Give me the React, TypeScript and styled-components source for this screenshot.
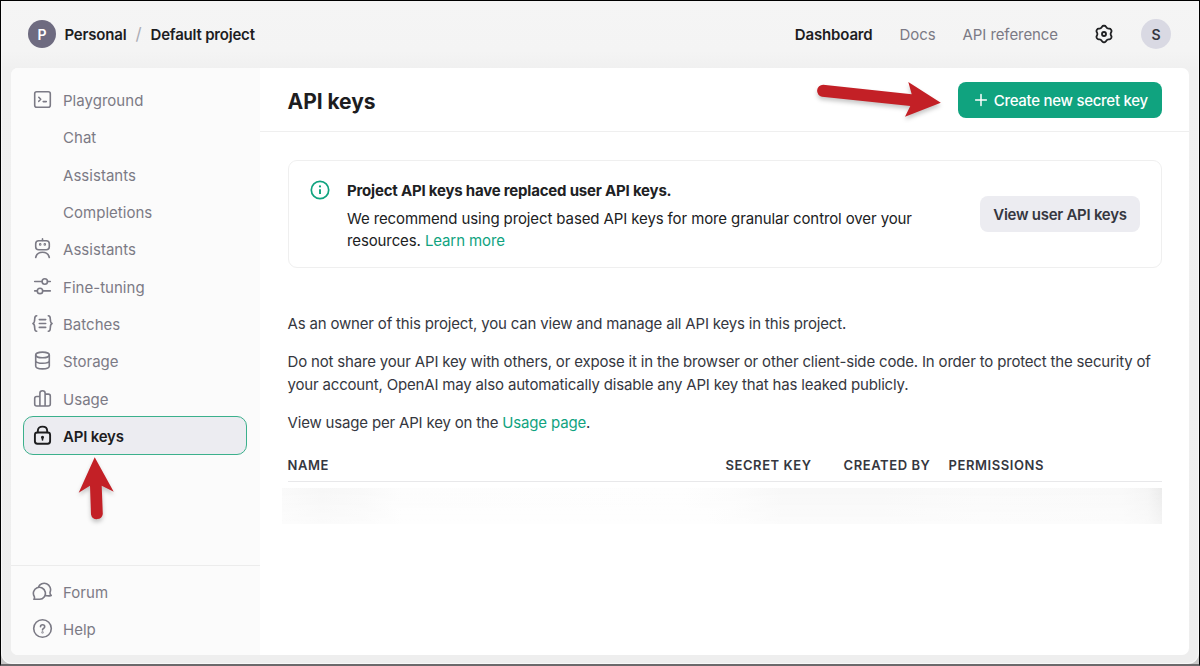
import React from "react";
import styled, { createGlobalStyle } from "styled-components";

const GlobalStyle = createGlobalStyle`
  * { box-sizing: border-box; }
  html, body { margin: 0; padding: 0; background: #c9c9c9; }
  body {
    font-family: Inter, "Liberation Sans", sans-serif;
    -webkit-font-smoothing: antialiased;
    overflow: hidden;
  }
`;

const Desktop = styled.div`
  position: relative;
  width: 1200px;
  height: 666px;
  border: 1px solid #000;
  border-bottom: 2px solid #6b696b;
  background: #c9c9c9;
`;

const AppWindow = styled.div`
  display: flex;
  flex-direction: column;
  height: 100%;
  padding: 0 9px 8px;
  border: 1px solid #f8f8f8;
  border-width: 0 1px 1px;
  border-radius: 0 0 11px 11px;
  background: linear-gradient(#f5f5f5 0, #f4f4f4 50px, #f0f0f0 68px, #eeeeee 100%);
`;

const TopBar = styled.header`
  display: flex;
  align-items: center;
  flex: none;
  height: 67px;
  padding: 0 18px 1px 17px;
`;

const Avatar = styled.span<{ $tone: "dark" | "light" }>`
  display: flex;
  align-items: center;
  justify-content: center;
  width: ${(p) => (p.$tone === "dark" ? 28 : 30)}px;
  height: ${(p) => (p.$tone === "dark" ? 28 : 30)}px;
  border-radius: 50%;
  background: ${(p) => (p.$tone === "dark" ? "#6e6b80" : "#d9d9e3")};
  color: ${(p) => (p.$tone === "dark" ? "#fff" : "#353740")};
  font-size: 14px;
  font-weight: 600;
`;

const Crumb = styled.span`
  color: #1d1d1f;
  font-size: 15px;
  font-weight: 600;
  letter-spacing: -0.2px;
  line-height: 20px;
`;

const CrumbList = styled.div`
  display: flex;
  align-items: center;
  gap: 9px;
  margin-left: 8.5px;
  padding-top: 2px;
`;

const Slash = styled.span`
  color: #acacb4;
  font-size: 17px;
  line-height: 20px;
  margin-top: -2px;
`;

const TopNav = styled.nav`
  display: flex;
  align-items: center;
  margin-left: auto;
  gap: 27px;
`;

const TopLink = styled.a<{ $active?: boolean }>`
  padding-top: 2px;
  color: ${(p) => (p.$active ? "#1d1d1f" : "#7b7a85")};
  font-size: 15px;
  font-weight: ${(p) => (p.$active ? 600 : 400)};
  letter-spacing: ${(p) => (p.$active ? "-0.15px" : "-0.08px")};
  line-height: 20px;
`;

const TopIcons = styled.div`
  display: flex;
  align-items: center;
  gap: 26px;
  margin-left: 8px;
`;

const Panel = styled.div`
  display: flex;
  flex: 1;
  min-height: 0;
  overflow: hidden;
  border-radius: 7px;
  background: #fff;
`;

const Sidebar = styled.aside`
  display: flex;
  flex-direction: column;
  flex: none;
  width: 249px;
  padding-top: 13px;
  background: #fbfbfb;
`;

const NavItem = styled.a<{ $active?: boolean }>`
  display: flex;
  align-items: center;
  height: ${(p) => (p.$active ? 39 : 37.33)}px;
  margin: ${(p) => (p.$active ? "-1px" : "0")} 13px 0 12px;
  padding-left: ${(p) => (p.$active ? 8 : 9)}px;
  border: ${(p) => (p.$active ? "1.5px solid #3bb08c" : "0")};
  border-radius: 10px;
  background: ${(p) => (p.$active ? "#ececf1" : "transparent")};
  color: ${(p) => (p.$active ? "#1d1d1f" : "#7b7a85")};
  font-size: 15px;
  font-weight: ${(p) => (p.$active ? 600 : 400)};
  letter-spacing: ${(p) => (p.$active ? "-0.2px" : "0.03px")};
`;

const NavIcon = styled.span`
  display: flex;
  width: 21px;
  height: 21px;
  margin-right: 10px;
  color: inherit;
`;

const NavLabel = styled.span`
  padding-top: 2px;
`;

const SidebarFooter = styled.div`
  margin-top: auto;
  padding: 6px 0 8px;
  border-top: 1px solid #ececec;
`;

const Content = styled.main`
  display: flex;
  flex-direction: column;
  flex: 1;
  min-width: 0;
`;

const ContentHeader = styled.div`
  display: flex;
  align-items: center;
  justify-content: space-between;
  flex: none;
  height: 64px;
  padding: 0 27px 0 27.5px;
  border-bottom: 1px solid #efefef;
`;

const Title = styled.h1`
  margin: 4px 0 0;
  color: #1d1d1f;
  font-size: 21px;
  font-weight: 700;
  letter-spacing: -0.05px;
  line-height: 28px;
`;

const Button = styled.button<{ $primary?: boolean }>`
  display: flex;
  align-items: center;
  justify-content: center;
  flex: none;
  width: ${(p) => (p.$primary ? 204 : 160)}px;
  height: 36px;
  padding: ${(p) => (p.$primary ? "1px 0 0 2px" : "0")};
  border: 0;
  border-radius: 8px;
  background: ${(p) => (p.$primary ? "#10a37f" : "#ececf1")};
  color: ${(p) => (p.$primary ? "#fff" : "#353740")};
  font-family: inherit;
  font-size: 15px;
  font-weight: ${(p) => (p.$primary ? 500 : 600)};
  letter-spacing: ${(p) => (p.$primary ? "-0.28px" : "-0.27px")};
  gap: 5.5px;
`;

const Body = styled.div`
  display: flex;
  flex-direction: column;
  padding: 28px 27px 0 27.5px;
`;

const Notice = styled.section`
  display: flex;
  align-items: center;
  height: 108px;
  padding: 0 21px 0 21.5px;
  border: 1px solid #efefef;
  border-radius: 9px;
`;

const NoticeIcon = styled.span`
  align-self: flex-start;
  display: flex;
  margin: 19px 17px 0 0;
`;

const NoticeText = styled.div`
  flex: 1;
  padding-top: 5px;
  color: #202123;
  font-size: 15px;
  letter-spacing: -0.11px;
  line-height: 22.5px;
  white-space: nowrap;
`;

const NoticeTitle = styled.strong`
  display: block;
  margin-bottom: 5px;
  font-weight: 700;
  letter-spacing: -0.2px;
`;

const Link = styled.a`
  color: #10a37f;
`;

const Copy = styled.div`
  display: flex;
  flex-direction: column;
  gap: 16px;
  margin-top: 45px;
  color: #353740;
  font-size: 15px;
  letter-spacing: -0.175px;
  line-height: 22.4px;
`;

const Paragraph = styled.p`
  margin: 0;
  white-space: nowrap;
`;

const TableHead = styled.div`
  display: grid;
  grid-template-columns: 438px 118px 105px 1fr;
  height: 35px;
  margin-top: 12px;
  padding-top: 2px;
  border-bottom: 1px solid #e8e8ea;
  align-items: center;
  color: #353740;
  font-size: 13px;
  font-weight: 600;
  letter-spacing: 0.57px;
`;

const RedactedRow = styled.div`
  height: 36px;
  margin: 6px 0 0 -6px;
  background:
    linear-gradient(180deg, rgba(255, 255, 255, 0) 0, rgba(255, 255, 255, 0.45) 100%),
    linear-gradient(90deg, #fafafa 0, #f7f7f7 40px, #f9f9f9 80px, #fdfdfd 120px, #fefefe 400px,
      #fcfcfc 450px, #f8f8f8 500px, #f8f8f8 600px, #fafafa 700px, #f9f9f9 840px, #f5f5f5 866px, #ebebeb 100%);
`;

const Overlay = styled.svg`
  position: absolute;
  top: -1px;
  left: -1px;
  pointer-events: none;
  filter: drop-shadow(0 3px 2px rgba(0, 0, 0, 0.22));
`;

const Glyph = ({ children, width = 1.6 }: { children: React.ReactNode; width?: number }) => (
  <svg
    width="21"
    height="21"
    viewBox="-10.5 -10.5 21 21"
    fill="none"
    stroke="currentColor"
    strokeWidth={width}
    strokeLinecap="round"
    strokeLinejoin="round"
  >
    {children}
  </svg>
);

const icons: Record<string, React.ReactNode> = {
  playground: (
    <Glyph>
      <rect x="-7.8" y="-7.8" width="15.6" height="15.6" rx="2" />
      <path d="M-3.7-2.2-1.8-.2-3.7 1.8M.7 2.1H3.8" />
    </Glyph>
  ),
  assistants: (
    <Glyph>
      <rect x="-6.8" y="-7.8" width="13.6" height="9" rx="3" />
      <path d="M0-9.6v1.5M-6.8 9C-6 5-3.5 3.8 0 3.8S6 5 6.8 9" />
      <circle cx="-2.3" cy="-4.1" r=".5" />
      <circle cx="2.3" cy="-4.1" r=".5" />
    </Glyph>
  ),
  tuning: (
    <Glyph>
      <circle cx="2.3" cy="-5" r="2.7" />
      <circle cx="-2.5" cy="4.4" r="2.7" />
      <path d="M-7.8-5H-.4M5-5H7.8M-7.8 4.4H-5.2M.2 4.4H7.8" />
    </Glyph>
  ),
  batches: (
    <Glyph>
      <path d="M-5.8-7.8C-7.8-7.8-7.8-6.5-7.8-4.5-7.8-2-8-.8-9.5 0-8 .8-7.8 2-7.8 4.5-7.8 6.5-7.8 7.8-5.8 7.8M5.8-7.8C7.8-7.8 7.8-6.5 7.8-4.5 7.8-2 8-.8 9.5 0 8 .8 7.8 2 7.8 4.5 7.8 6.5 7.8 7.8 5.8 7.8M-3.2-3.9H3.2M-3.2 0H3.2M-3.2 3.9H3.2" />
    </Glyph>
  ),
  storage: (
    <Glyph>
      <ellipse cx="0" cy="-5.6" rx="6.8" ry="2.8" />
      <path d="M-6.8-5.6V5.6C-6.8 7.2-3.8 8.4 0 8.4S6.8 7.2 6.8 5.6V-5.6M-6.8 0C-6.8 1.6-3.8 2.8 0 2.8S6.8 1.6 6.8 0" />
    </Glyph>
  ),
  usage: (
    <Glyph>
      <path d="M-2.6 7.5H-5.8Q-7.8 7.5-7.8 5.5V0Q-7.8-2-5.8-2H-2.6M-2.6 7.5V-5.5Q-2.6-7.8 0-7.8T2.6-5.5V7.5ZM2.6-4.4H5.8Q7.8-4.4 7.8-2.4V5.5Q7.8 7.5 5.8 7.5H2.6" />
    </Glyph>
  ),
  keys: (
    <Glyph width={1.9}>
      <rect x="-7.6" y="-3" width="15.2" height="11.2" rx="2.4" />
      <path d="M-4.7-3.2V-4.6C-4.7-7.2-2.7-8.9 0-8.9S4.7-7.2 4.7-4.6V-3.2" />
      <circle cx="0" cy="1.7" r=".9" fill="currentColor" strokeWidth="1.2" />
      <path d="M0 2V4.4" strokeWidth="1.6" />
    </Glyph>
  ),
  forum: (
    <Glyph>
      <path d="M-8.7 7.8C-7.7 7-7.9 6-8.2 5A6 6 0 1 1-2.8 7.8ZM-4.2-4.2A6.1 6.1 0 1 1 7.6.6C7.3 2 7.6 3 8.7 3.9 7 4.5 5.2 4.5 3.3 4" />
    </Glyph>
  ),
  help: (
    <Glyph>
      <circle r="8.8" />
      <path d="M-2-1.7C-2-3-1-3.7.1-3.7S2.2-3 2.2-1.8C2.2-.2 0-.2 0 1.4" />
      <circle cx="0" cy="3.9" r=".35" />
    </Glyph>
  ),
};

const SettingsIcon = () => (
  <svg width="22" height="22" viewBox="0 0 24 24" fill="none" stroke="#202123" strokeWidth="2">
    <circle cx="12" cy="12" r="2.2" />
    <path d="M11.6439 3C10.9352 3 10.2794 3.37508 9.92002 3.98596L9.49644 4.70605C8.96184 5.61487 7.98938 6.17632 6.93501 6.18489L6.09967 6.19168C5.39096 6.19744 4.73823 6.57783 4.38386 7.19161L4.02776 7.80841C3.67339 8.42219 3.67032 9.17767 4.01969 9.7943L4.43151 10.5212C4.95127 11.4386 4.95127 12.5615 4.43151 13.4788L4.01969 14.2057C3.67032 14.8224 3.67339 15.5778 4.02776 16.1916L4.38386 16.8084C4.73823 17.4222 5.39096 17.8026 6.09966 17.8083L6.93502 17.8151C7.98939 17.8237 8.96185 18.3851 9.49645 19.294L9.92002 20.014C10.2794 20.6249 10.9352 21 11.6439 21H12.3561C13.0648 21 13.7206 20.6249 14.08 20.014L14.5035 19.294C15.0381 18.3851 16.0106 17.8237 17.065 17.8151L17.9004 17.8083C18.6091 17.8026 19.2618 17.4222 19.6162 16.8084L19.9723 16.1916C20.3267 15.5778 20.3298 14.8224 19.9804 14.2057L19.5686 13.4788C19.0488 12.5615 19.0488 11.4386 19.5686 10.5212L19.9804 9.7943C20.3298 9.17767 20.3267 8.42219 19.9723 7.80841L19.6162 7.19161C19.2618 6.57783 18.6091 6.19744 17.9004 6.19168L17.065 6.18489C16.0106 6.17632 15.0382 5.61487 14.5036 4.70605L14.08 3.98596C13.7206 3.37508 13.0648 3 12.3561 3H11.6439Z" />
  </svg>
);

const InfoIcon = () => (
  <svg width="20" height="20" viewBox="0 0 20 20" fill="none" stroke="#10a37f" strokeWidth="1.7">
    <circle cx="10" cy="10" r="8.7" />
    <path d="M10 9.2v4.9" strokeWidth="1.9" />
    <circle cx="10" cy="6.4" r="1.1" fill="#10a37f" stroke="none" />
  </svg>
);

const PlusIcon = () => (
  <svg width="14" height="14" viewBox="0 0 14 14" stroke="#fff" strokeWidth="1.5" strokeLinecap="round">
    <path d="M7 1.6v10.8M1.6 7h10.8" />
  </svg>
);

const navItems: { label: string; icon?: string; active?: boolean }[] = [
  { label: "Playground", icon: "playground" },
  { label: "Chat" },
  { label: "Assistants" },
  { label: "Completions" },
  { label: "Assistants", icon: "assistants" },
  { label: "Fine-tuning", icon: "tuning" },
  { label: "Batches", icon: "batches" },
  { label: "Storage", icon: "storage" },
  { label: "Usage", icon: "usage" },
  { label: "API keys", icon: "keys", active: true },
];

const footerItems = [
  { label: "Forum", icon: "forum" },
  { label: "Help", icon: "help" },
];

export default function App() {
  return (
    <Desktop>
      <GlobalStyle />
      <AppWindow>
        <TopBar>
          <Avatar $tone="dark">P</Avatar>
          <CrumbList>
            <Crumb>Personal</Crumb>
            <Slash>/</Slash>
            <Crumb>Default project</Crumb>
          </CrumbList>
          <TopNav>
            <TopLink $active>Dashboard</TopLink>
            <TopLink>Docs</TopLink>
            <TopLink>API reference</TopLink>
            <TopIcons>
              <SettingsIcon />
              <Avatar $tone="light">S</Avatar>
            </TopIcons>
          </TopNav>
        </TopBar>
        <Panel>
          <Sidebar>
            {navItems.map((item, i) => (
              <NavItem key={i} $active={item.active}>
                <NavIcon>{item.icon && icons[item.icon]}</NavIcon>
                <NavLabel>{item.label}</NavLabel>
              </NavItem>
            ))}
            <SidebarFooter>
              {footerItems.map((item) => (
                <NavItem key={item.label}>
                  <NavIcon>{icons[item.icon]}</NavIcon>
                  <NavLabel>{item.label}</NavLabel>
                </NavItem>
              ))}
            </SidebarFooter>
          </Sidebar>
          <Content>
            <ContentHeader>
              <Title>API keys</Title>
              <Button $primary>
                <PlusIcon />
                Create new secret key
              </Button>
            </ContentHeader>
            <Body>
              <Notice>
                <NoticeIcon>
                  <InfoIcon />
                </NoticeIcon>
                <NoticeText>
                  <NoticeTitle>Project API keys have replaced user API keys.</NoticeTitle>
                  We recommend using project based API keys for more granular control over your
                  <br />
                  resources. <Link>Learn more</Link>
                </NoticeText>
                <Button>View user API keys</Button>
              </Notice>
              <Copy>
                <Paragraph>As an owner of this project, you can view and manage all API keys in this project.</Paragraph>
                <Paragraph>
                  Do not share your API key with others, or expose it in the browser or other client-side code. In order to protect the security of
                  <br />
                  your account, OpenAI may also automatically disable any API key that has leaked publicly.
                </Paragraph>
                <Paragraph>
                  View usage per API key on the <Link>Usage page</Link>.
                </Paragraph>
              </Copy>
              <TableHead>
                <span>NAME</span>
                <span>SECRET KEY</span>
                <span>CREATED BY</span>
                <span>PERMISSIONS</span>
              </TableHead>
              <RedactedRow />
            </Body>
          </Content>
        </Panel>
      </AppWindow>
      <Overlay width="1200" height="666" viewBox="0 0 1200 666" fill="#c32026">
        <path d="M823.2 84.8 911.7 94.2 908.3 82 940.8 102.7 905 116.7 910.3 106 822 96.7A6 6 0 0 1 823.2 84.8Z" />
        <path d="M94.7 457.3 113.7 491.7 101.7 485.7 102.8 514A6 6 0 0 1 91 514.4L90 485.7 78.7 492.7Z" />
      </Overlay>
    </Desktop>
  );
}
